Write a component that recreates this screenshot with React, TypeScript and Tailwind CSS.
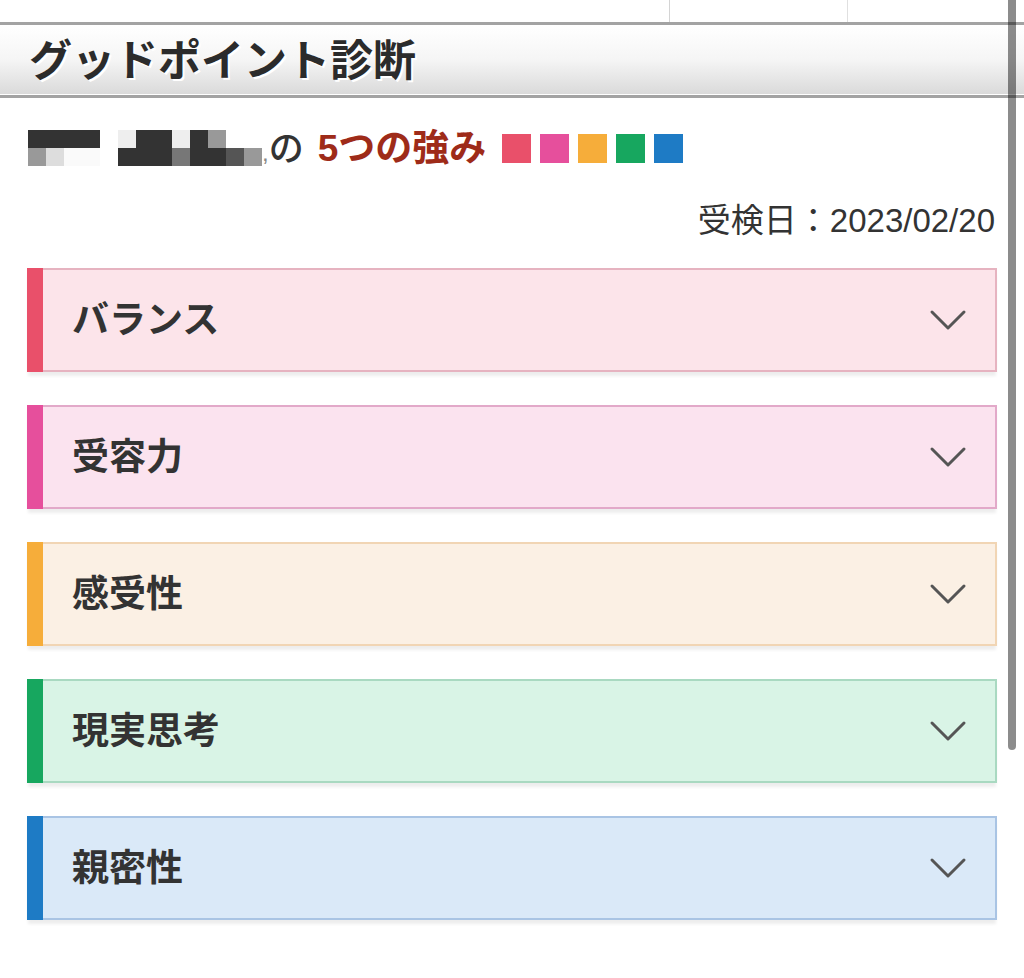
import React from "react";

const JP = "font-['Liberation_Sans','Noto_Sans_CJK_JP',sans-serif]";

type Card = { title: string; bg: string; border: string; bar: string };

const cards: Card[] = [
  { title: "バランス", bg: "bg-[#fce4ea]", border: "border-[#e6b3c0]", bar: "bg-[#e9506a]" },
  { title: "受容力", bg: "bg-[#fbe3ef]", border: "border-[#e2a9c9]", bar: "bg-[#e64f9c]" },
  { title: "感受性", bg: "bg-[#fbf0e4]", border: "border-[#f1d5b4]", bar: "bg-[#f6ad3a]" },
  { title: "現実思考", bg: "bg-[#d9f4e6]", border: "border-[#a9d9c1]", bar: "bg-[#17a75f]" },
  { title: "親密性", bg: "bg-[#dae9f8]", border: "border-[#a9c4e4]", bar: "bg-[#1e7bc5]" },
];

function Chevron() {
  return (
    <svg width="38" height="24" viewBox="0 0 38 24" fill="none">
      <path d="M3 4 L19 20 L35 4" stroke="#555" strokeWidth="3" strokeLinecap="round" strokeLinejoin="round" />
    </svg>
  );
}

const px1 = ["#333", "#333", "#333", "#333"];
const px1b = ["#999", "#ddd", "#fafafa", "#fafafa"];
const px2 = ["#eee", "#333", "#333", "#eee", "#333", "#999", "#fff", "#fff"];
const px2b = ["#333", "#333", "#333", "#777", "#333", "#333", "#555", "#999"];

function Pixels({ top, bottom }: { top: string[]; bottom: string[] }) {
  return (
    <div className="flex flex-col">
      <div className="flex">
        {top.map((c, i) => (
          <div key={i} className="w-[18px] h-[18px]" style={{ background: c }} />
        ))}
      </div>
      <div className="flex">
        {bottom.map((c, i) => (
          <div key={i} className="w-[18px] h-[18px]" style={{ background: c }} />
        ))}
      </div>
    </div>
  );
}

export default function App() {
  return (
    <div className={`relative w-[1024px] h-[978px] bg-white overflow-hidden ${JP}`}>
      {/* table remnants on top */}
      <div className="flex h-[22px]">
        <div className="w-[670px] border-r border-[#d4d4d4]" />
        <div className="w-[178px] border-r border-[#e0e0e0]" />
        <div className="flex-1" />
      </div>

      {/* header */}
      <div className="border-y-[3px] border-[#a3a3a3]">
        <div className="h-[70px] border-y border-white bg-linear-to-b from-white via-[#f5f5f5] to-[#dadada] flex items-center pl-[29px]">
          <h1 className="text-[43px] leading-none font-bold text-[#2b2b2b] [text-shadow:2px_2px_0_#fff] pt-[2px]">
            グッドポイント診断
          </h1>
        </div>
      </div>

      {/* name row */}
      <div className="mt-[32px] px-[28px] flex items-center h-[36px]">
        <div className="flex items-center">
          <Pixels top={px1} bottom={px1b} />
          <div className="w-[18px]" />
          <Pixels top={px2} bottom={px2b} />
        </div>
        <span className="text-[24px] leading-none text-[#888] mt-[10px]">,</span>
        <span className="text-[35px] leading-none font-medium text-[#333]">の</span>
        <span className="text-[37px] leading-none font-bold text-[#9e2b19] ml-[14px]">5つの強み</span>
        <div className="flex gap-[9px] ml-[16px]">
          <div className="w-[29px] h-[29px] bg-[#e9506a]" />
          <div className="w-[29px] h-[29px] bg-[#e64f9c]" />
          <div className="w-[29px] h-[29px] bg-[#f6ad3a]" />
          <div className="w-[29px] h-[29px] bg-[#17a75f]" />
          <div className="w-[29px] h-[29px] bg-[#1e7bc5]" />
        </div>
      </div>

      {/* date */}
      <div className="mt-[36px] pr-[29px] flex justify-end items-center h-[36px]">
        <span className="text-[33px] leading-none text-[#333]">受検日：2023/02/20</span>
      </div>

      {/* cards */}
      <div className="mt-[30px] px-[27px] flex flex-col gap-[33px]">
        {cards.map((c) => (
          <div key={c.title} className="h-[104px] flex shadow-[0_5px_3px_-1px_rgba(0,0,0,0.07)]">
            <div className={`w-[16px] ${c.bar}`} />
            <div
              className={`flex-1 flex items-center justify-between border-y-2 border-r-2 ${c.border} ${c.bg} pl-[29px] pr-[28px]`}
            >
              <span className="text-[37px] leading-none font-bold text-[#333]">{c.title}</span>
              <Chevron />
            </div>
          </div>
        ))}
      </div>

      {/* scroll indicator */}
      <div className="absolute top-0 left-[1008px] w-[8px] h-[750px] rounded-b-full bg-[rgba(0,0,0,0.45)]" />
    </div>
  );
}
